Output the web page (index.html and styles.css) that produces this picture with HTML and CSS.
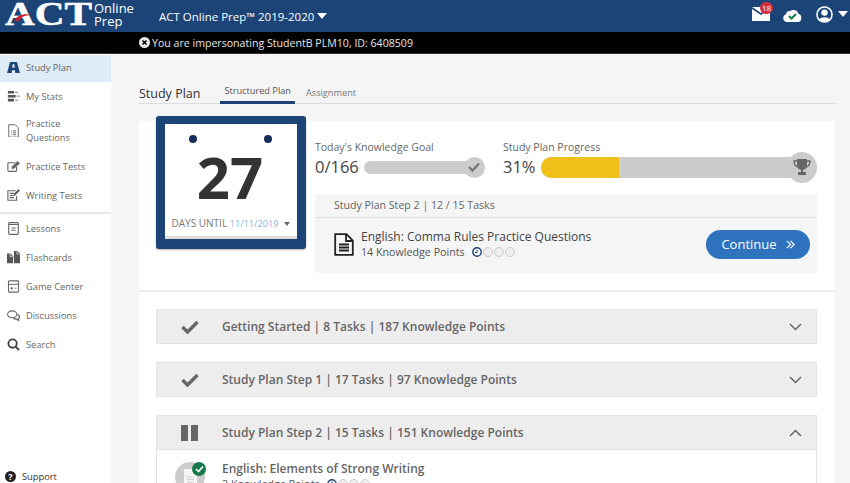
FILE: index.html
```html
<!DOCTYPE html>
<html lang="en">
  <head>
    <meta charset="UTF-8" />
    <title>Study Plan</title>
    <link rel="stylesheet" href="styles.css">
  </head>
  <body>
    <header class="topBar">
      <div class="logo">
        <div class="logoMark">
          <span class="logoAct">ACT</span>
          <svg class="logoSwoosh" width="18" height="8" viewBox="0 0 18 8"><path d="M0 8C3 3 9 0 18 2 11 2 7 4 5 8Z" fill="#c8202f"/></svg>
        </div>
        <div class="logoName">Online<br>Prep</div>
      </div>
      <div class="courseName">ACT Online Prep™ 2019-2020<span class="caret"></span></div>
      <div class="topIcons">
        <div class="mailIcon">
          <svg width="18" height="14" viewBox="0 0 18 14"><path d="M0 2 9 8 18 1V14H0Z" fill="#fff"/><path d="M0 0H17L9 6Z" fill="#fff"/></svg>
          <span class="mailBadge">18</span>
        </div>
        <svg class="cloudIcon" width="19" height="14" viewBox="0 0 19 14"><path d="M4 14a4 4 0 0 1-1-7.800 4 4 0 0 1 4.500-3.200 5 5 0 0 1 8 3 3 4 0 0 1-.5 8Z" fill="#fff"/><path d="M6 8 8.500 10.500 13 6" fill="none" stroke="#157a4a" stroke-width="2"/></svg>
        <svg class="userIcon" width="17" height="17" viewBox="0 0 18 18"><circle cx="9" cy="9" r="8" fill="#1d4477" stroke="#fff" stroke-width="1.600"/><circle cx="9" cy="7" r="3.400" fill="#fff"/><path d="M3.500 14.500C4.500 11 13.500 11 14.500 14.500 11 17 7 17 3.500 14.500Z" fill="#fff"/></svg>
        <span class="caret"></span>
      </div>
    </header>

    <div class="impersonateBar">
      <svg width="11" height="11" viewBox="0 0 11 11"><circle cx="5.500" cy="5.500" r="5.500" fill="#e8e8e8"/><path d="M3.500 3.500 7.500 7.500M7.500 3.500 3.500 7.500" stroke="#000" stroke-width="1.600"/></svg>
      You are impersonating StudentB PLM10, ID: 6408509
    </div>

    <div class="layout">
      <nav class="sideNav">
        <a class="navItem active" href="#">
          <svg viewBox="0 0 15 13"><path fill-rule="evenodd" d="M3.500 0H11.500L15 13H9.500L9.200 9.500H5.800L5.500 13H0ZM6.400 2.500 6.100 6.500H8.900L8.600 2.500Z" fill="#1d4477"/></svg>
          Study Plan</a>
        <a class="navItem" href="#">
          <svg viewBox="0 0 15 12"><path d="M1 0H8V3H1ZM1 4.500H10V7.500H1ZM1 9H8V12H1Z" fill="#555"/><path d="M9 1.500H13M11 6H15M9 10.500H13" stroke="#999" stroke-width="1.500"/></svg>
          My Stats</a>
        <a class="navItem tall" href="#">
          <svg viewBox="0 0 15 16"><path d="M2 .8H9.500L13 4.300V15.200H2ZM5 8H6M7 8H10.500M5 10.200H6M7 10.200H10.500M5 12.400H6M7 12.400H10.500" fill="none" stroke="#666" stroke-width="1.100"/></svg>
          <span>Practice<br>Questions</span></a>
        <a class="navItem" href="#">
          <svg viewBox="0 0 15 13"><path d="M9 2H2Q1 2 1 3V11Q1 12 2 12H10Q11 12 11 11V7" fill="none" stroke="#666" stroke-width="1.300"/><path d="M5 9 6 6 12 0 15 3 8 9Z" fill="#666"/></svg>
          Practice Tests</a>
        <a class="navItem" href="#">
          <svg viewBox="0 0 15 14"><path d="M10 2H1V13H11V8M3 5H8M3 7.500H7M3 10H8" fill="none" stroke="#666" stroke-width="1.300"/><path d="M7 8 8 5.500 13 0 15 2 9.500 7.500Z" fill="#666"/></svg>
          Writing Tests</a>
        <div class="navDivider"></div>
        <a class="navItem" href="#">
          <svg viewBox="0 0 15 15"><rect x="2" y=".7" width="11" height="13.600" rx="1" fill="none" stroke="#666" stroke-width="1.300"/><path d="M2 3H13M5 7H10M5 9.500H10" fill="none" stroke="#666" stroke-width="1.200"/></svg>
          Lessons</a>
        <a class="navItem" href="#">
          <svg viewBox="0 0 15 14"><path d="M0 3H4L7 6V14H0Z" fill="#555"/><path d="M8 0H12L15 3V14H8Z" fill="#555"/><path d="M11.500 .5V3.500H14.500M3.500 3.500V6.500H6.500" fill="none" stroke="#fff" stroke-width=".8"/></svg>
          Flashcards</a>
        <a class="navItem" href="#">
          <svg viewBox="0 0 15 15"><rect x="1.700" y="1" width="11.600" height="13" rx="1" fill="none" stroke="#666" stroke-width="1.200"/><path d="M2 5H13M4 9.500H7M5.500 8V11M9 9.500H11" fill="none" stroke="#666" stroke-width="1.100"/></svg>
          Game Center</a>
        <a class="navItem" href="#">
          <svg viewBox="0 0 15 13"><ellipse cx="6" cy="5" rx="5.400" ry="4" fill="none" stroke="#666" stroke-width="1.200"/><path d="M12 5C15 6 15 9 13 10L13.500 12 10.500 10.500C9 10.500 8 10 7.500 9.500" fill="none" stroke="#666" stroke-width="1.400"/></svg>
          Discussions</a>
        <a class="navItem" href="#">
          <svg viewBox="0 0 14 14"><circle cx="6" cy="6" r="4.500" fill="none" stroke="#444" stroke-width="2"/><path d="M9 9 13 13" stroke="#444" stroke-width="2.200"/></svg>
          Search</a>
        <a class="supportLink" href="#">
          <span class="supportIcon">?</span>
          Support</a>
      </nav>

      <main class="content">
        <div class="titleRow">
          <h1>Study Plan</h1>
          <a class="tab current" href="#">Structured Plan</a>
          <a class="tab" href="#">Assignment</a>
        </div>

        <section class="planCard">
          <div class="summary">
            <div class="calendar">
              <div class="calendarDots"><span></span><span></span></div>
              <div class="calendarDays">27</div>
              <div class="calendarFoot">DAYS UNTIL <span class="examDate">11/11/2019</span><span class="smallCaret"></span></div>
            </div>

            <div class="summaryRight">
              <div class="goals">
                <div class="goalToday">
                  <div class="goalLabel">Today's Knowledge Goal</div>
                  <div class="goalRow">
                    <span class="goalValue">0/166</span>
                    <div class="goalBar">
                      <span class="goalEnd">
                        <svg width="12" height="10" viewBox="0 0 12 10"><path d="M1 5 4.500 8.500 11 1.500" fill="none" stroke="#777" stroke-width="2.400"/></svg>
                      </span>
                    </div>
                  </div>
                </div>
                <div class="goalProgress">
                  <div class="goalLabel">Study Plan Progress</div>
                  <div class="goalRow">
                    <span class="goalValue">31%</span>
                    <div class="progressBar">
                      <div class="progressFill" style="width: 78px"></div>
                      <span class="progressEnd">
                        <svg width="18" height="17" viewBox="0 0 18 17"><path d="M4 0H14V6Q14 10 10 11V13H13V16H5V13H8V11Q4 10 4 6Z" fill="#666"/><path d="M4 2H1Q1 7 5 8M14 2H17Q17 7 13 8" fill="none" stroke="#666" stroke-width="1.400"/></svg>
                      </span>
                    </div>
                  </div>
                </div>
              </div>

              <div class="taskBox">
                <div class="taskHead">Study Plan Step 2 | 12 / 15 Tasks</div>
                <div class="taskBody">
                  <svg width="20" height="23" viewBox="0 0 20 23"><path d="M1.200 1.200H12.500L18.800 7.500V21.800H1.200ZM12 1.500V8H18.500M5 11.500H15M5 14.500H15M5 17.500H15" fill="none" stroke="#222" stroke-width="1.800"/></svg>
                  <div class="taskText">
                    <div class="taskTitle">English: Comma Rules Practice Questions</div>
                    <div class="taskPoints">14 Knowledge Points
                      <span class="dots">
                        <svg width="10" height="10" viewBox="0 0 10 10"><circle cx="5" cy="5" r="4.200" fill="#fff" stroke="#1d4477" stroke-width="1.400"/><path d="M5 2.500V5.500H3" fill="none" stroke="#1d4477"/></svg>
                        <i class="dot"></i><i class="dot"></i><i class="dot"></i>
                      </span>
                    </div>
                  </div>
                  <a class="continueBtn" href="#">Continue
                    <svg width="9" height="9" viewBox="0 0 10 9"><path d="M1 .5 5 4.500 1 8.500M5 .5 9 4.500 5 8.500" fill="none" stroke="#fff" stroke-width="1.300"/></svg>
                  </a>
                </div>
              </div>
            </div>
          </div>

          <div class="steps">
            <div class="stepRow">
              <span class="stepIcon"><svg width="18" height="14" viewBox="0 0 18 14"><path d="M1.500 7 6.500 12 16.500 2" fill="none" stroke="#666" stroke-width="3.400"/></svg></span>
              <span class="stepName">Getting Started | 8 Tasks | 187 Knowledge Points</span>
              <svg width="13" height="8" viewBox="0 0 13 8"><path d="M1 1 6.500 6.500 12 1" fill="none" stroke="#666" stroke-width="1.500"/></svg>
            </div>
            <div class="stepRow">
              <span class="stepIcon"><svg width="18" height="14" viewBox="0 0 18 14"><path d="M1.500 7 6.500 12 16.500 2" fill="none" stroke="#666" stroke-width="3.400"/></svg></span>
              <span class="stepName">Study Plan Step 1 | 17 Tasks | 97 Knowledge Points</span>
              <svg width="13" height="8" viewBox="0 0 13 8"><path d="M1 1 6.500 6.500 12 1" fill="none" stroke="#666" stroke-width="1.500"/></svg>
            </div>
            <div class="stepOpen">
              <div class="stepRow">
                <span class="stepIcon"><svg width="17" height="16" viewBox="0 0 17 16"><path d="M0 0H7V16H0ZM10 0H17V16H10Z" fill="#666"/></svg></span>
                <span class="stepName">Study Plan Step 2 | 15 Tasks | 151 Knowledge Points</span>
                <svg width="13" height="8" viewBox="0 0 13 8"><path d="M1 7 6.500 1.500 12 7" fill="none" stroke="#666" stroke-width="1.500"/></svg>
              </div>
              <div class="lessonRow">
                <div class="lessonIcon">
                  <svg width="14" height="16" viewBox="0 0 14 16"><path d="M1 0H9L14 5V16H1Z" fill="#f4f4f4"/><path d="M4 8H11M4 10.500H11M4 13H11" stroke="#ccc" stroke-width="1.200"/></svg>
                  <span class="lessonDone"><svg width="9" height="8" viewBox="0 0 9 8"><path d="M1 4 3.500 6.500 8 1.500" fill="none" stroke="#fff" stroke-width="1.700"/></svg></span>
                </div>
                <div>
                  <div class="lessonTitle">English: Elements of Strong Writing</div>
                  <div class="lessonPoints">3 Knowledge Points
                    <span class="dots">
                      <svg width="10" height="10" viewBox="0 0 10 10"><circle cx="5" cy="5" r="4.200" fill="#fff" stroke="#1d4477" stroke-width="1.400"/><path d="M5 2.500V5.500H3" fill="none" stroke="#1d4477"/></svg>
                      <i class="dot"></i><i class="dot"></i><i class="dot"></i>
                    </span>
                  </div>
                </div>
              </div>
            </div>
          </div>
        </section>
      </main>
    </div>
  </body>
</html>
```

FILE: styles.css
```css
* {
  box-sizing: border-box;
}

html, body {
  margin: 0;
  height: 483px;
  overflow: hidden;
}

body {
  font-family: "Open Sans", sans-serif;
  background-color: #f5f5f5;
  color: #555;
}

a {
  text-decoration: none;
  color: inherit;
}

/* top bar */
.topBar {
  height: 32px;
  background-color: #1d4477;
  color: #fff;
  display: flex;
  align-items: center;
  padding-left: 5px;
}

.logo {
  display: flex;
  align-items: center;
  width: 154px;
}

.logoMark {
  position: relative;
  width: 89px;
  height: 32px;
}

.logoAct {
  display: inline-block;
  font-family: "Liberation Serif", serif;
  font-weight: bold;
  font-size: 33px;
  line-height: 29px;
  -webkit-text-stroke: .5px #fff;
  transform: scaleX(1.25);
  transform-origin: left center;
}

.logoSwoosh {
  position: absolute;
  left: 9px;
  top: 13px;
}

.logoName {
  font-size: 13px;
  line-height: 13px;
  margin-bottom: 3px;
}

.courseName {
  font-size: 11.500px;
  display: flex;
  align-items: center;
  gap: 3px;
}

.caret {
  display: inline-block;
  border-left: 5px solid transparent;
  border-right: 5px solid transparent;
  border-top: 6px solid #fff;
}

.topIcons {
  margin-left: auto;
  display: flex;
  align-items: center;
  padding: 0 2px 4px 0;
}

.mailIcon {
  position: relative;
  display: flex;
  margin-right: 13px;
}

.mailBadge {
  position: absolute;
  left: 8px;
  top: -5px;
  width: 13px;
  height: 12px;
  border-radius: 6px;
  background-color: #d2303f;
  font-size: 8px;
  line-height: 12px;
  text-align: center;
}

.cloudIcon {
  margin-right: 14px;
  margin-top: 2px;
}

.userIcon {
  margin-right: 5px;
}

.impersonateBar {
  height: 22px;
  background-color: #000;
  color: #e6e6e6;
  font-size: 10.600px;
  padding-left: 139px;
  display: flex;
  align-items: center;
  gap: 2px;
  border-bottom: 1px solid #333;
}

/* sidebar */
.layout {
  display: flex;
  height: 429px;
}

.sideNav {
  width: 111px;
  flex-shrink: 0;
  background-color: #fff;
  display: flex;
  flex-direction: column;
  padding-top: 1px;
}

.navItem {
  height: 29px;
  display: flex;
  align-items: center;
  gap: 6px;
  padding-left: 7px;
  font-size: 9.300px;
  color: #666;
}

.navItem svg {
  width: 13px;
  height: auto;
  flex-shrink: 0;
}

.navItem.active {
  height: 27px;
  padding-bottom: 2px;
  background-color: #dfebf7;
}

.navItem.tall {
  height: 41px;
  padding-bottom: 2px;
  line-height: 13.500px;
}

.navDivider {
  height: 2px;
  margin-top: 2px;
  background-color: #e8e8e8;
}

.supportLink {
  margin-top: auto;
  height: 14px;
  display: flex;
  align-items: center;
  gap: 6px;
  padding-left: 5px;
  font-size: 9.300px;
  color: #333;
}

.supportIcon {
  width: 11px;
  height: 11px;
  border-radius: 50%;
  background-color: #222;
  color: #fff;
  font-size: 9px;
  font-weight: bold;
  line-height: 11px;
  text-align: center;
}

/* main column */
.content {
  flex: 1;
  padding: 0 15px 0 28px;
  overflow: hidden;
}

.titleRow {
  height: 50px;
  padding-top: 28px;
  display: flex;
  align-items: flex-end;
  border-bottom: 1px solid #ddd;
}

h1 {
  margin: 0 20px 0 0;
  font-size: 12.500px;
  font-weight: 400;
  line-height: 19px;
  color: #333;
}

.tab {
  font-size: 9.200px;
  color: #777;
  padding: 0 4px 3px;
  margin-right: 7px;
  line-height: 14px;
}

.tab.current {
  color: #555;
  border-bottom: 3px solid #1d4477;
  margin-bottom: -1px;
}

.planCard {
  background-color: #fff;
  margin-top: 17px;
  padding: 0 18px 0 17px;
  height: 400px;
}

/* calendar and goals */
.summary {
  display: flex;
  height: 171px;
  border-bottom: 2px solid #eee;
  margin: 0 -18px 0 -17px;
  padding: 0 18px 0 17px;
}

.calendar {
  width: 150px;
  height: 133px;
  margin-top: -5px;
  background-color: #fff;
  border: solid #1d4477;
  border-width: 8px 9px 10px 9px;
  border-radius: 3px;
  box-shadow: inset 0 -3px 0 #ddd, 0 1px 2px rgba(0, 0, 0, .3);
  flex-shrink: 0;
  text-align: center;
}

.calendarDots {
  display: flex;
  justify-content: space-between;
  padding: 11px 25px 0 24px;
}

.calendarDots span {
  width: 8px;
  height: 8px;
  border-radius: 50%;
  background-color: #14305a;
}

.calendarDays {
  font-size: 58px;
  font-weight: bold;
  line-height: 60px;
  margin-top: 4px;
  margin-right: 2px;
  color: #333;
}

.calendarFoot {
  font-size: 10px;
  color: #777;
  margin-top: 9px;
  white-space: nowrap;
}

.examDate {
  font-size: 9.200px;
  color: #8fb0d8;
}

.smallCaret {
  display: inline-block;
  margin-left: 6px;
  vertical-align: middle;
  border-left: 3.500px solid transparent;
  border-right: 3.500px solid transparent;
  border-top: 4px solid #666;
}

.summaryRight {
  flex: 1;
  padding-left: 9px;
}

.goals {
  display: flex;
  height: 73px;
  padding-top: 19px;
}

.goalToday {
  width: 188px;
}

.goalProgress {
  flex: 1;
}

.goalLabel {
  font-size: 10.500px;
  line-height: 14px;
  color: #666;
}

.goalRow {
  display: flex;
  align-items: center;
  height: 24px;
  margin-top: 1px;
}

.goalValue {
  font-size: 16.500px;
  color: #444;
  margin-right: 5px;
  line-height: 20px;
}

.goalBar {
  width: 115px;
  height: 13px;
  border-radius: 7px;
  background-color: #ccc;
  position: relative;
}

.goalEnd {
  position: absolute;
  right: -6px;
  top: -4px;
  width: 21px;
  height: 21px;
  border-radius: 50%;
  background-color: #ccc;
  display: flex;
  align-items: center;
  justify-content: center;
}

.progressBar {
  flex: 1;
  height: 21px;
  border-radius: 11px;
  background-color: #ccc;
  position: relative;
}

.progressFill {
  height: 100%;
  border-radius: 11px 0 0 11px;
  background-color: #efc11a;
}

.progressEnd {
  position: absolute;
  right: 0;
  top: -5px;
  width: 30px;
  height: 31px;
  border-radius: 50%;
  background-color: #ccc;
  display: flex;
  align-items: center;
  justify-content: center;
}

.taskBox {
  background-color: #f5f5f5;
  border-radius: 3px;
  height: 79px;
}

.taskHead {
  height: 24px;
  padding-left: 19px;
  font-size: 10.600px;
  line-height: 23px;
  color: #666;
  border-bottom: 1px solid #ddd;
}

.taskBody {
  display: flex;
  align-items: center;
  height: 55px;
  padding: 0 7px 3px 19px;
}

.taskText {
  margin-left: 7px;
}

.taskTitle {
  font-size: 12px;
  line-height: 16px;
  color: #444;
}

.taskPoints, .lessonPoints {
  font-size: 10.700px;
  line-height: 14px;
  color: #555;
  display: flex;
  align-items: center;
  gap: 7px;
}

.dots {
  display: inline-flex;
  gap: 1px;
}

.dot {
  width: 10px;
  height: 10px;
  border-radius: 50%;
  border: 1px solid #ccc;
  background-color: #eee;
}

.continueBtn {
  margin-left: auto;
  width: 104px;
  height: 29px;
  border-radius: 15px;
  background-color: #2f72bd;
  color: #fff;
  font-size: 13px;
  display: flex;
  align-items: center;
  justify-content: center;
  gap: 9px;
}

/* accordion */
.steps {
  padding-top: 17px;
}

.stepRow {
  display: flex;
  align-items: center;
  height: 35px;
  margin-bottom: 18px;
  padding-right: 14px;
  background-color: #ededed;
  border: 1px solid #e4e4e4;
}

.stepIcon {
  width: 65px;
  display: flex;
  justify-content: center;
}

.stepName {
  flex: 1;
  font-size: 12px;
  font-weight: 600;
  color: #666;
  padding-bottom: 1px;
}

.stepOpen {
  border: 1px solid #e4e4e4;
  border-top: 0;
}

.stepOpen .stepRow {
  margin: 0 -1px;
}

.lessonRow {
  display: flex;
  padding: 11px 0 0 18px;
  gap: 17px;
}

.lessonIcon {
  position: relative;
  width: 30px;
  height: 30px;
  margin-top: 1px;
  border-radius: 50%;
  background-color: #ccc;
  display: flex;
  align-items: center;
  justify-content: center;
}

.lessonDone {
  position: absolute;
  right: -1px;
  top: 0;
  width: 14px;
  height: 14px;
  border-radius: 50%;
  background-color: #157a4a;
  display: flex;
  align-items: center;
  justify-content: center;
}

.lessonTitle {
  font-size: 12px;
  font-weight: 600;
  line-height: 16px;
  color: #666;
}
```
